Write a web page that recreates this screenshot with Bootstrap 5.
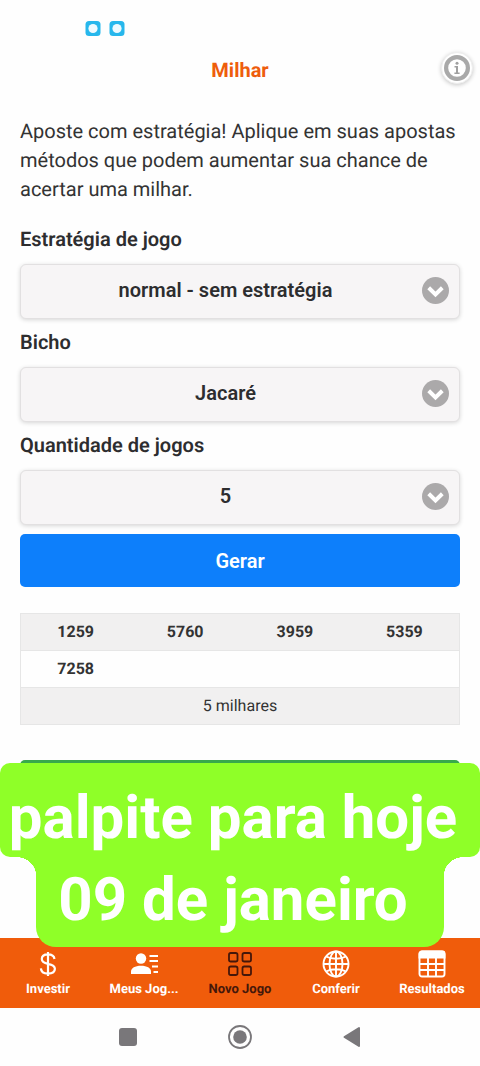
<!DOCTYPE html>
<html lang="pt-BR">
<head>
<meta charset="utf-8">
<meta name="viewport" content="width=device-width, initial-scale=1">
<title>Milhar</title>
<link href="https://cdn.jsdelivr.net/npm/bootstrap@5.3.0/dist/css/bootstrap.min.css" rel="stylesheet">
<style>
  body { font-family: Roboto, "Liberation Sans", sans-serif; font-size: 20px; line-height: 29px; color: #333; background: #fefefe; text-rendering: geometricPrecision; }
  svg { display: block; }
  .status-strip { height: 40px; padding: 21px 85px 0; gap: 8px; }
  .app-header { height: 60px; }
  .app-title { font-size: 20px; line-height: 24px; color: #ee5d0c; }
  .info-btn { position: absolute; right: 7px; top: 12px; width: 32px; height: 32px; border: 1px solid #eee; border-radius: 50%; background: #fff; box-shadow: 0 1px 4px rgba(0,0,0,.22); padding: 2px; }
  .content { padding: 17px 20px 0; }
  .intro { margin-bottom: 21px; }
  .field-label { display: block; font-weight: 600; line-height: 29px; margin-bottom: 10px; color: #2d2d2f; }
  .field-box { position: relative; margin-bottom: 9px; }
  .field-box select { display: block; appearance: none; width: 100%; height: 55px; padding: 0 49px 3px 20px; border: 1px solid #e2e0e1; border-radius: 6px; background: #f7f5f6; box-shadow: 0 1px 4px rgba(0,0,0,.16); font-weight: 600; color: #2d2d2f; text-align: center; text-align-last: center; }
  .field-box svg { position: absolute; right: 11px; top: 13px; pointer-events: none; }
  .btn-main { height: 53px; border: 0; border-radius: 5px; font-size: 20px; font-weight: 600; background: #0d7ffb; color: #fff; }
  .btn-save { background: #37a94c; }
  .results { margin: 26px 0 35px; border: 1px solid #e6e6e6; font-size: 16px; line-height: 24px; table-layout: fixed; color: #333; text-align: center; }
  .results td { padding: 6px; height: 37px; border: 0; border-bottom: 1px solid #e6e6e6; background: transparent; color: #333; }
  .results .num { font-weight: 700; }
  .results .shade { background: #f1f0f0; }
  .tab-strip { background: #f05c0b; height: 70px; }
  .tab-strip a { color: #fff; font-size: 13px; font-weight: 700; line-height: 16px; text-decoration: none; padding-top: 12px; gap: 4px; }
  .tab-strip a.active { color: #45170a; }
  .sys-strip { height: 58px; }
  .sys-strip button { width: 112px; border: 0; background: none; color: #79777a; }
  .caption-tag { position: absolute; left: 0; right: 0; bottom: 119px; color: #fff; font-size: 60px; font-weight: 700; text-align: center; white-space: nowrap; }
  .caption-tag span { display: block; background: #8fff28; }
  .cap-top { height: 94px; line-height: 110px; padding-right: 14px; border-radius: 10px; }
  .cap-low { position: relative; height: 90px; line-height: 86px; margin: 0 36px; padding-right: 14px; border-radius: 0 0 20px 20px; }
  .cap-low::before, .cap-low::after { content: ""; position: absolute; top: 0; width: 20px; height: 18px; }
  .cap-low::before { right: 100%; background: radial-gradient(ellipse at 0 100%, transparent 70%, #8fff28 71%); }
  .cap-low::after { left: 100%; background: radial-gradient(ellipse at 100% 100%, transparent 70%, #8fff28 71%); }
</style>
</head>
<body>
<div class="position-relative d-flex flex-column min-vh-100 overflow-hidden">
  <div class="status-strip d-flex">
    <svg width="16" height="15" viewBox="0 0 15 15"><rect width="15" height="15" rx="3.500" fill="#27b7ec"/><circle cx="7.500" cy="7.500" r="4.600" fill="#eefaff"/></svg>
    <svg width="16" height="15" viewBox="0 0 15 15"><rect width="15" height="15" rx="3.500" fill="#27b7ec"/><circle cx="7.500" cy="7.500" r="4.600" fill="#eefaff"/></svg>
  </div>
  <header class="app-header position-relative d-flex align-items-center justify-content-center">
    <h1 class="app-title fw-bold m-0">Milhar</h1>
    <button class="info-btn" type="button" aria-label="Informações">
      <svg width="26" height="26" viewBox="0 0 26 26"><circle cx="13" cy="13" r="10.900" fill="#fff" stroke="#a9a9a9" stroke-width="4.200"/><circle cx="13" cy="8.200" r="1.500" fill="#a0a0a0"/><path d="M10.500 11H14v6.500h1.600V19h-5.200v-1.500H12v-5h-1.500z" fill="#a0a0a0"/></svg>
    </button>
  </header>

  <main class="content flex-grow-1">
    <p class="intro">Aposte com estratégia! Aplique em suas apostas métodos que podem aumentar sua chance de acertar uma milhar.</p>
    <form>
      <label class="field-label" for="estrategia">Estratégia de jogo</label>
      <div class="field-box">
        <select id="estrategia"><option>normal - sem estratégia</option></select>
        <svg width="27" height="27" viewBox="0 0 27 27"><circle cx="13.5" cy="13.5" r="13.5" fill="#aba9aa"/><path d="M6.700 10.800l6.800 6.600 6.800-6.600" fill="none" stroke="#fff" stroke-width="4"/></svg>
      </div>
      <label class="field-label" for="bicho">Bicho</label>
      <div class="field-box">
        <select id="bicho"><option>Jacaré</option></select>
        <svg width="27" height="27" viewBox="0 0 27 27"><circle cx="13.5" cy="13.5" r="13.5" fill="#aba9aa"/><path d="M6.700 10.800l6.800 6.600 6.800-6.600" fill="none" stroke="#fff" stroke-width="4"/></svg>
      </div>
      <label class="field-label" for="quantidade">Quantidade de jogos</label>
      <div class="field-box">
        <select id="quantidade"><option>5</option></select>
        <svg width="27" height="27" viewBox="0 0 27 27"><circle cx="13.5" cy="13.5" r="13.5" fill="#aba9aa"/><path d="M6.700 10.800l6.800 6.600 6.800-6.600" fill="none" stroke="#fff" stroke-width="4"/></svg>
      </div>
      <button class="btn btn-primary btn-main w-100" type="button">Gerar</button>
    </form>
    <table class="table results">
      <tbody>
        <tr class="num shade"><td>1259</td><td>5760</td><td>3959</td><td>5359</td></tr>
        <tr class="num"><td>7258</td><td></td><td></td><td></td></tr>
        <tr class="shade"><td colspan="4">5 milhares</td></tr>
      </tbody>
    </table>
    <button class="btn btn-success btn-main btn-save w-100" type="button" aria-label="Salvar"></button>
  </main>

  <nav class="tab-strip row row-cols-5 g-0 flex-nowrap">
    <a href="#" class="d-flex flex-column align-items-center">
      <svg width="28" height="28" viewBox="0 0 28 28" fill="none" stroke="currentColor" stroke-width="2.200"><path d="M14 2v24M20.500 9c-.4-2.800-2.800-4.600-6.500-4.600-3.700 0-6.200 1.800-6.200 4.700 0 2.900 2.100 3.900 6.200 4.700 4.700.9 6.900 2.100 6.900 5 0 3-2.700 4.800-6.900 4.800-4.200 0-6.900-1.900-7.100-5.200"/></svg>
      <span>Investir</span>
    </a>
    <a href="#" class="d-flex flex-column align-items-center">
      <svg width="28" height="28" viewBox="0 0 28 28"><circle cx="11" cy="8.500" r="5.200" fill="currentColor"/><path d="M1 24v-2.500C1 18 5 15.700 11 15.700S21 18 21 21.500V24z" fill="currentColor"/><path d="M19.500 6H28M19.500 11H28M22 16.500h6M23.500 22H28" stroke="currentColor" stroke-width="1.800"/></svg>
      <span>Meus Jog...</span>
    </a>
    <a href="#" class="active d-flex flex-column align-items-center" aria-current="page">
      <svg width="28" height="28" viewBox="0 0 28 28" fill="none" stroke="currentColor" stroke-width="1.800"><rect x="3" y="3" width="8.500" height="8.500" rx="1.800"/><rect x="16.500" y="3" width="8.500" height="8.500" rx="1.800"/><rect x="3" y="16.500" width="8.500" height="8.500" rx="1.800"/><rect x="16.500" y="16.500" width="8.500" height="8.500" rx="1.800"/></svg>
      <span>Novo Jogo</span>
    </a>
    <a href="#" class="d-flex flex-column align-items-center">
      <svg width="28" height="28" viewBox="0 0 28 28" fill="none" stroke="currentColor" stroke-width="1.900"><circle cx="14" cy="14" r="12.500"/><ellipse cx="14" cy="14" rx="6.500" ry="12.500"/><path d="M14 1.500v25M1.500 14h25M4 6.500c5.500 3 14.500 3 20 0M4 21.500c5.500-3 14.500-3 20 0"/></svg>
      <span>Conferir</span>
    </a>
    <a href="#" class="d-flex flex-column align-items-center">
      <svg width="28" height="28" viewBox="0 0 28 28" fill="none" stroke="currentColor" stroke-width="1.900"><rect x="1.500" y="1.500" width="25" height="25" rx="2.500"/><path d="M1.500 4a2.500 2.500 0 0 1 2.500-2.500h20A2.500 2.500 0 0 1 26.500 4v3.500h-25z" fill="currentColor"/><path d="M1.500 14h25M1.500 20h25M10 8v18.500M18 8v18.500"/></svg>
      <span>Resultados</span>
    </a>
  </nav>

  <div class="sys-strip d-flex justify-content-center align-items-center">
    <button type="button" aria-label="Recentes"><svg class="mx-auto" width="18" height="18"><rect width="18" height="18" rx="3" fill="currentColor"/></svg></button>
    <button type="button" aria-label="Início"><svg class="mx-auto" width="24" height="24"><circle cx="12" cy="12" r="11" fill="none" stroke="currentColor" stroke-width="1.800"/><circle cx="12" cy="12" r="6.800" fill="currentColor"/></svg></button>
    <button type="button" aria-label="Voltar"><svg class="mx-auto" width="18" height="22"><path d="M1.500 11L16 2v18z" fill="currentColor" stroke="currentColor" stroke-width="2" stroke-linejoin="round"/></svg></button>
  </div>

  <div class="caption-tag">
    <span class="cap-top">palpite para hoje</span>
    <span class="cap-low">09 de janeiro</span>
  </div>
</div>
<script src="https://cdn.jsdelivr.net/npm/bootstrap@5.3.0/dist/js/bootstrap.bundle.min.js"></script>
</body>
</html>
